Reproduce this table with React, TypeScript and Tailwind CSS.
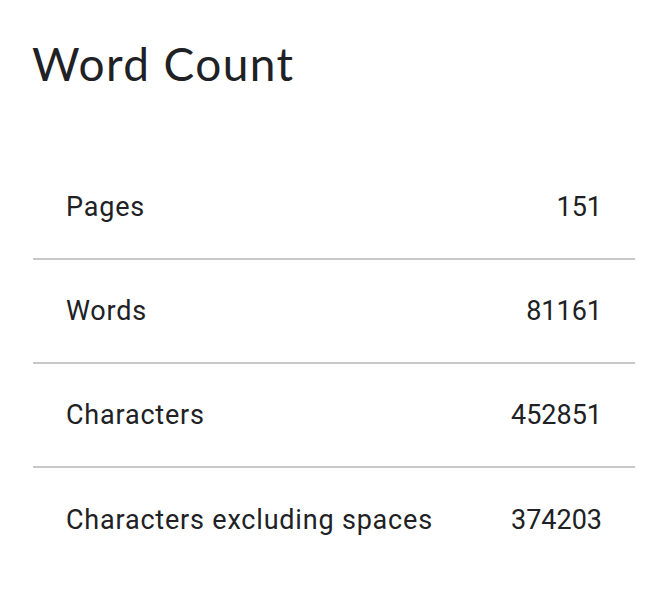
const rows = [
  { label: "Pages", value: "151" },
  { label: "Words", value: "81161" },
  { label: "Characters", value: "452851" },
  { label: "Characters excluding spaces", value: "374203" },
];

export default function App() {
  return (
    <div className="h-[602px] w-[668px] bg-white text-[#202124]">
      <h1 className="pl-[32px] pt-[33px] font-['Lato',sans-serif] text-[46px] leading-[62px] font-normal tracking-[1.4px]">
        Word Count
      </h1>

      <div className="mx-[33px] mt-[61px] font-['Roboto',sans-serif] text-[27px]">
        {rows.map((row, i) => (
          <div
            key={row.label}
            className={`flex h-[104px] items-center justify-between px-[33px] ${
              i < rows.length - 1 ? "border-b-2 border-[#c8c8c8]" : ""
            }`}
          >
            <span className="tracking-[0.8px]">{row.label}</span>
            <span>{row.value}</span>
          </div>
        ))}
      </div>
    </div>
  );
}
